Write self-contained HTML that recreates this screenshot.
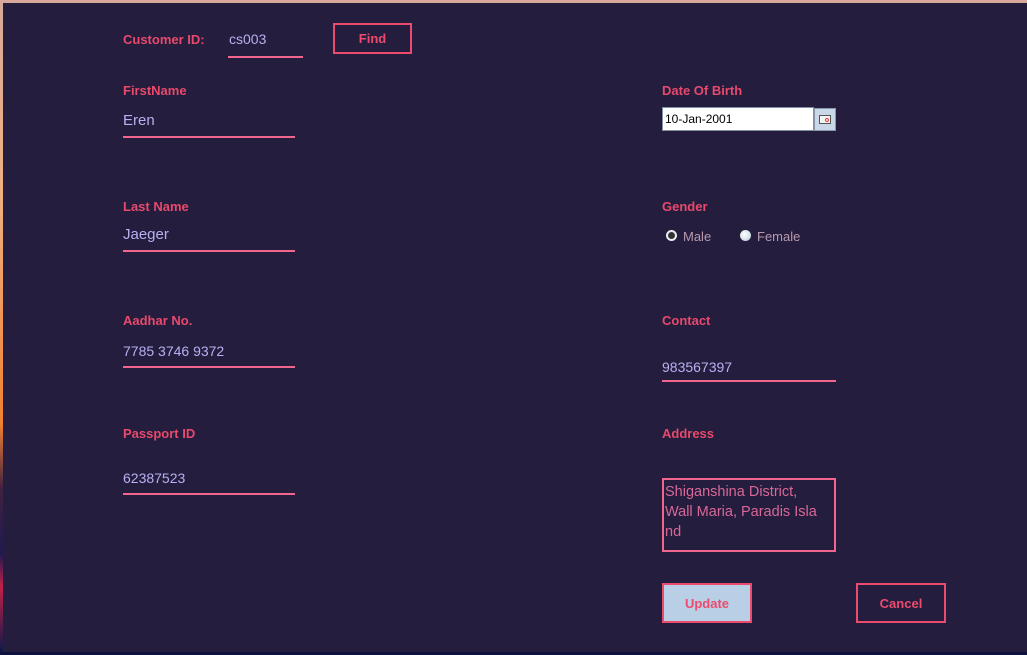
<!DOCTYPE html>
<html><head><style>
*{margin:0;padding:0;box-sizing:border-box}
body{width:1027px;height:655px;overflow:hidden;background:#0e1240;position:relative;font-family:"Liberation Sans",sans-serif}
#edge{position:absolute;left:0;top:0;width:1027px;height:652px;background:linear-gradient(180deg,#d8a89a 0%,#f0b080 30%,#f08030 65%,#402040 75%,#201a50 85%,#c0204a 90%,#101848 100%)}
#main{position:absolute;left:3px;top:3px;width:1024px;height:649px;background:#241d3d}
.l{position:absolute;color:#e8496c;font-weight:bold;font-size:13px}
.v{position:absolute;color:#b8b0f0;font-size:15px}
.u{position:absolute;height:2px;background:#f0668f}
.btn{position:absolute;border:2px solid #ec4b6e;color:#ec4b6e;font-weight:bold;font-size:13px;text-align:center}
</style></head><body>
<div id="edge"></div><div id="main"></div>
<div class="l" style="left:123px;top:32px">Customer ID:</div>
<div class="v" style="left:229px;top:31px;font-size:14px">cs003</div>
<div class="u" style="left:228px;top:56px;width:75px"></div>
<div class="btn" style="left:333px;top:23px;width:79px;height:31px;line-height:27px">Find</div>

<div class="l" style="left:123px;top:83px">FirstName</div>
<div class="v" style="left:123px;top:112px">Eren</div>
<div class="u" style="left:123px;top:136px;width:172px"></div>

<div class="l" style="left:123px;top:199px">Last Name</div>
<div class="v" style="left:123px;top:226px">Jaeger</div>
<div class="u" style="left:123px;top:250px;width:172px"></div>

<div class="l" style="left:123px;top:313px">Aadhar No.</div>
<div class="v" style="left:123px;top:343px;font-size:14px">7785 3746 9372</div>
<div class="u" style="left:123px;top:366px;width:172px"></div>

<div class="l" style="left:123px;top:426px">Passport ID</div>
<div class="v" style="left:123px;top:470px;font-size:14px">62387523</div>
<div class="u" style="left:123px;top:493px;width:172px"></div>

<div class="l" style="left:662px;top:83px">Date Of Birth</div>
<div style="position:absolute;left:662px;top:107px;width:152px;height:24px;background:#fff;border:1px solid #8090a0;font-size:12px;line-height:22px;padding-left:2px;color:#000">10-Jan-2001</div>
<div style="position:absolute;left:814px;top:108px;width:22px;height:23px;background:#c8d8e8;border:1px solid #8898a8"><div style="position:absolute;left:4px;top:6px;width:12px;height:9px;border:1px solid #555;background:#f4f4f4"><div style="position:absolute;right:1px;top:2px;width:4px;height:4px;border:1px solid #e04040;border-radius:50%"></div></div></div>

<div class="l" style="left:662px;top:199px">Gender</div>
<div style="position:absolute;left:666px;top:230px;width:11px;height:11px;border-radius:50%;background:#333;border:2px solid #e8eef4"></div>
<div class="v" style="left:683px;top:229px;font-size:13px;color:#b89ab0">Male</div>
<div style="position:absolute;left:740px;top:230px;width:11px;height:11px;border-radius:50%;background:radial-gradient(circle at 40% 40%,#fff,#b8c8d8)"></div>
<div class="v" style="left:757px;top:229px;font-size:13px;color:#b89ab0">Female</div>

<div class="l" style="left:662px;top:313px">Contact</div>
<div class="v" style="left:662px;top:359px;font-size:14px">983567397</div>
<div class="u" style="left:662px;top:380px;width:174px"></div>

<div class="l" style="left:662px;top:426px">Address</div>
<div style="position:absolute;left:662px;top:478px;width:174px;height:74px;border:2px solid #f0668f;color:#d86898;font-size:14.5px;line-height:20px;padding:2px 0 0 1px;overflow:hidden;white-space:nowrap">Shiganshina District,<br>Wall Maria, Paradis Isla<br>nd</div>

<div class="btn" style="left:662px;top:583px;width:90px;height:40px;line-height:38px;background:#b8cfe6">Update</div>
<div class="btn" style="left:856px;top:583px;width:90px;height:40px;line-height:38px">Cancel</div>
</body></html>
